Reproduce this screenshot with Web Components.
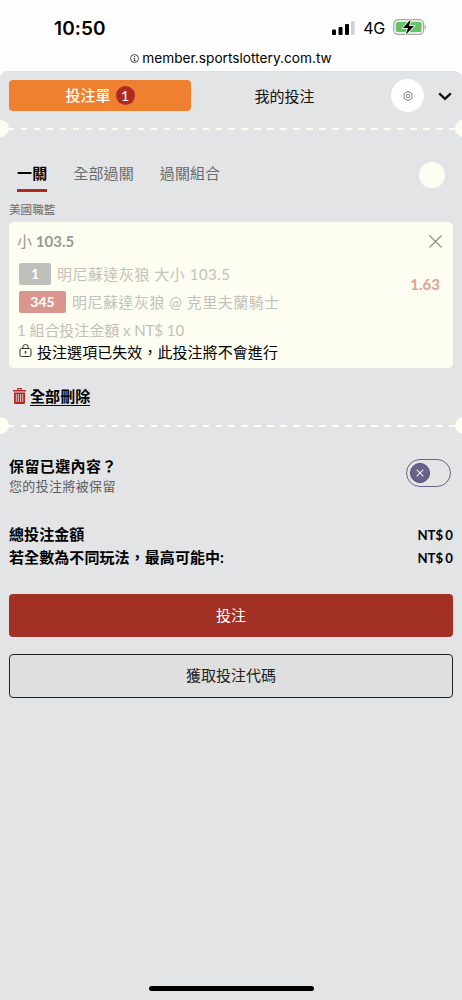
<!DOCTYPE html>
<html lang="zh-Hant">
<head>
<meta charset="utf-8">
<title>投注單</title>
<style>
html,body{margin:0;height:100%;background:#fefefe}
body{font-family:Lato,"Noto Sans CJK TC",sans-serif;color:#111;overflow:hidden}
</style>
</head>
<body>
<bet-app></bet-app>
<script>
const define = (name, markup) => {
  const t = document.createElement('template');
  t.innerHTML = markup;
  customElements.define(name, class extends HTMLElement {
    constructor() {
      super();
      this.attachShadow({mode: 'open'}).appendChild(t.content.cloneNode(true));
    }
  });
};

define('status-bar', `<style>
:host{display:block;height:72px;box-sizing:border-box;padding-top:16px;font-family:Inter,"Liberation Sans",sans-serif;color:#000}
.top{display:flex;align-items:center;height:24px;padding:0 35px 0 54px}
.time{font-size:19px;font-weight:600;letter-spacing:.1px;margin-right:auto}
.net{font-size:16px;letter-spacing:-.3px;margin:0 8px 0 8px;line-height:22px}
.url{display:flex;justify-content:center;align-items:center;gap:3px;height:20px;margin-top:8px;font-size:13.700px}
svg{display:block;flex:none}
</style>
<div class="top"><span class="time">10:50</span>
<svg width="24" height="16" viewBox="0 0 24 16"><rect x="1" y="9.500" width="4" height="5.500" rx="1"/><rect x="7.500" y="7" width="4" height="8" rx="1"/><rect x="14" y="4" width="4" height="11" rx="1"/><rect x="20" y="1" width="3.700" height="14" rx="1" fill="#d2d2d2"/></svg>
<span class="net">4G</span>
<svg width="34" height="18" viewBox="0 1 34 18"><rect x=".7" y="1.700" width="30" height="14.600" rx="4.500" fill="#fff" stroke="#a5a5a5" stroke-width="1.300"/><rect x="2.700" y="3.700" width="26" height="10.600" rx="2.500" fill="#66c466"/><path d="M32 6.700q2 2.300 0 4.600z" fill="#999"/><path d="M17.800 1.200 10 10h5l-2.300 6.800L21 8h-5z" fill="#000" stroke="#fff" stroke-width="1.600" paint-order="stroke"/></svg></div>
<div class="url"><svg width="9" height="9" viewBox="0 0 9 9" fill="none" stroke="#222" stroke-width=".8"><circle cx="4.500" cy="4.500" r="4"/><path d="M4.500 2v1M3.700 4.200h.9v2.400M3.500 6.700h2.200"/></svg><span>member.sportslottery.com.tw</span></div>`);

define('top-nav', `<style>
:host{display:flex;align-items:center;height:33px;padding:7px 9px 0}
.slip{width:182px;height:31px;border-radius:4px;background:#ee8030;color:#fff;display:flex;align-items:center;justify-content:center;gap:5px;font-size:15px;font-weight:500}
.slip span:first-of-type{margin-top:-2px}
.count{width:19px;height:19px;border-radius:50%;background:#af2a20;font-size:14px;line-height:19px;text-align:center}
.mine{width:187px;text-align:center;font-size:15px;margin-top:-1px}
.gear{margin-left:13px;width:33px;height:33px;border-radius:50%;background:#fff;display:grid;place-items:center}
.arrow{margin-left:14px;margin-top:1px}
svg{display:block}
</style>
<div class="slip"><span>投注單</span><span class="count">1</span></div>
<div class="mine">我的投注</div>
<div class="gear"><svg width="10" height="10" viewBox="0 0 10 10" fill="none" stroke="#666" stroke-width=".8"><path d="m4 .7h2l.5 1.100 1.200-.3 1.300 1.400-.4 1.100.9 1-.9 1 .4 1.200-1.300 1.300-1.200-.3-.5 1.100H4l-.5-1.100-1.200.3L1 7.200 1.400 6l-.9-1 .9-1L1 2.900l1.300-1.400 1.200.3z"/><circle cx="5" cy="5" r="1.700"/></svg></div>
<svg class="arrow" width="14" height="9" viewBox="0 0 14 9" fill="none" stroke="#111" stroke-width="2.300"><path d="m1.200 1.300 5.800 5.600 5.800-5.600"/></svg>`);

define('ticket-tear', `<style>
:host{display:flex;align-items:center;height:17px;overflow:hidden}
i{flex:none;width:17px;height:17px;border-radius:50%;background:#fdfdf2}
i:first-of-type{margin-left:-8.500px} i:last-of-type{margin-right:-9.500px}
.line{flex:1;height:2.500px;margin:1px -1px 0;background:repeating-linear-gradient(90deg,#fdfdf2 0 6.500px,transparent 6.500px 12.970px)}
</style><i></i><div class="line"></div><i></i>`);

define('mode-tabs', `<style>
:host{display:flex;align-items:flex-start;height:39px;padding:0 17px;font-size:15px;color:#6a6b6e}
span{line-height:22px}
.on{color:#000;font-weight:700;height:27px;border-bottom:3px solid #af2a20;letter-spacing:.2px}
span+span{margin-left:26px;letter-spacing:.1px}
.dot{width:26px;height:26px;border-radius:50%;background:#fdfdf2;margin:0 0 0 auto}
</style><span class="on">一關</span><span>全部過關</span><span>過關組合</span><div class="dot"></div>`);

define('num-tag', `<style>
:host{display:block;width:32px;height:22px;line-height:22px;border-radius:2px;background:#bfc0bb;color:#fff;font-weight:700;font-size:14px;text-align:center}
:host([wide]){width:47px;background:#d9968f}
</style><slot></slot>`);

define('bet-card', `<style>
:host{display:block;height:146px;box-sizing:border-box;margin:0 9px;border-radius:5px;background:#fdfdf2;padding:8px 12px 0 9px;color:#c2c2bb;font-size:15px}
.head{display:flex;justify-content:space-between;height:24px;line-height:23px;color:#999994}
.head span{margin-left:-1px}
.mid{display:flex;align-items:center;height:66px}
.rows{flex:1;padding:1px 0 0 1px}
.row{display:flex;align-items:center;gap:6px;height:28px;line-height:26px;letter-spacing:.5px;white-space:nowrap}
.row num-tag{letter-spacing:0}
.odd{color:#dfa19a;font-weight:700;font-size:15px;padding-bottom:7px;margin-right:1px}
.sum{line-height:22px;height:22px;margin:-1px 0 0 -1px;letter-spacing:-.05px}
.warn{display:flex;align-items:center;gap:5px;line-height:22px;height:22px;color:#000;padding-left:1px}
.warn svg{margin-top:-2px}
.warn span{letter-spacing:.06px}
svg{display:block}
.x{margin:5px -1px 0 0}
</style>
<div class="head"><span>小 <b>103.5</b></span><svg class="x" width="13" height="13" viewBox="0 0 13 13" stroke="#8e8e89" stroke-width="1.200"><path d="m.5.5 12 12m0-12-12 12"/></svg></div>
<div class="mid"><div class="rows"><div class="row"><num-tag>1</num-tag><span>明尼蘇達灰狼 大小 103.5</span></div><div class="row"><num-tag wide>345</num-tag><span>明尼蘇達灰狼 @ 克里夫蘭騎士</span></div></div><div class="odd">1.63</div></div>
<div class="sum">1 組合投注金額 x NT$ 10</div>
<div class="warn"><svg width="13" height="14" viewBox="0 0 13 14" fill="none" stroke="#333"><rect x="1" y="4.500" width="11" height="8" rx="1.500"/><path d="M3.800 4.500V3.200a2.700 2.700 0 0 1 5.400 0v1.300"/><path d="M6.500 7v2.500" stroke-width="1.500"/></svg><span>投注選項已失效，此投注將不會進行</span></div>`);

define('delete-all', `<style>
:host{display:flex;align-items:center;gap:4px;height:22px;padding-left:13px;font-size:15px;font-weight:700;color:#000}
span{border-bottom:1.500px solid #111;height:18px;line-height:19px;letter-spacing:.1px}
</style><svg width="13" height="16" viewBox="0 0 13 16"><path fill="#b5271e" d="M4.200 0h4.600v2H13v1.600H0V2h4.200zM5.400 1v1h2.200V1zM1 4.500h11V14.500q0 1.500-1.500 1.500h-8Q1 16 1 14.500z" fill-rule="evenodd"/><path stroke="#ebd3d2" stroke-width=".9" d="M3.300 6v8M5.400 6v8M7.600 6v8M9.700 6v8"/></svg><span>全部刪除</span>`);

define('keep-row', `<style>
:host{display:flex;justify-content:space-between;padding:0 11px 0 9px;height:44px}
.t{font-size:15px;font-weight:700;line-height:22px;letter-spacing:.4px;color:#000;margin-top:-1px}
.s{font-size:13px;line-height:19px;color:#5c5d60;letter-spacing:.35px}
.sw{width:45px;height:28px;box-sizing:border-box;border:1.300px solid #66648a;border-radius:14px;padding:3px;margin-top:3px}
.k{width:20px;height:20px;border-radius:50%;background:#66648a;box-sizing:border-box;border:1px solid #4c4a6a;display:grid;place-items:center}
</style><div><div class="t">保留已選內容？</div><div class="s">您的投注將被保留</div></div>
<div class="sw"><div class="k"><svg width="8" height="8" viewBox="0 0 8 8" stroke="#eee" stroke-width="1.100"><path d="m.7.7 6.600 6.600m0-6.600L.7 7.300"/></svg></div></div>`);

define('total-row', `<style>
:host{display:flex;justify-content:space-between;align-items:center;padding:0 9px;height:23px;line-height:21px;font-size:15px;font-weight:700;color:#000;letter-spacing:.08px}
.v{font-size:13.200px;word-spacing:-1px;margin-top:2px;letter-spacing:0}
</style><slot></slot><span class="v">NT$ 0</span>`);

define('action-button', `<style>
:host{display:block;box-sizing:border-box;margin:0 9px;height:43px;line-height:43px;border-radius:4px;background:#a33024;color:#fff;font-size:15px;text-align:center}
:host([outline]){background:#dfdfdf;color:#222;border:1.500px solid #222;line-height:41px;height:44px;margin-top:17px}
</style><slot></slot>`);

define('bet-app', `<style>
:host{display:flex;flex-direction:column;height:1000px;width:462px}
main{flex:1;display:flex;flex-direction:column;background:#e3e4e6;border-radius:8px 8px 0 0;box-shadow:0 -1px 0 #dedede}
.league{margin:0 9px;height:20px;line-height:22px;font-size:11.600px;color:#6a6b6e}
.home{width:165px;height:5px;border-radius:3px;background:#000;margin:auto auto 9px}
</style>
<status-bar></status-bar>
<main>
<top-nav></top-nav>
<ticket-tear style="margin-top:8px"></ticket-tear>
<mode-tabs style="margin-top:25px"></mode-tabs>
<div class="league" style="margin-top:-2px;padding-bottom:3px">美國職籃</div>
<bet-card></bet-card>
<delete-all style="margin-top:17px"></delete-all>
<ticket-tear style="margin-top:10px"></ticket-tear>
<keep-row style="margin-top:22px"></keep-row>
<total-row style="margin-top:23px">總投注金額</total-row>
<total-row>若全數為不同玩法，最高可能中:</total-row>
<action-button style="margin-top:25px">投注</action-button>
<action-button outline>獲取投注代碼</action-button>
<div class="home"></div>
</main>`);
</script>
</body>
</html>
